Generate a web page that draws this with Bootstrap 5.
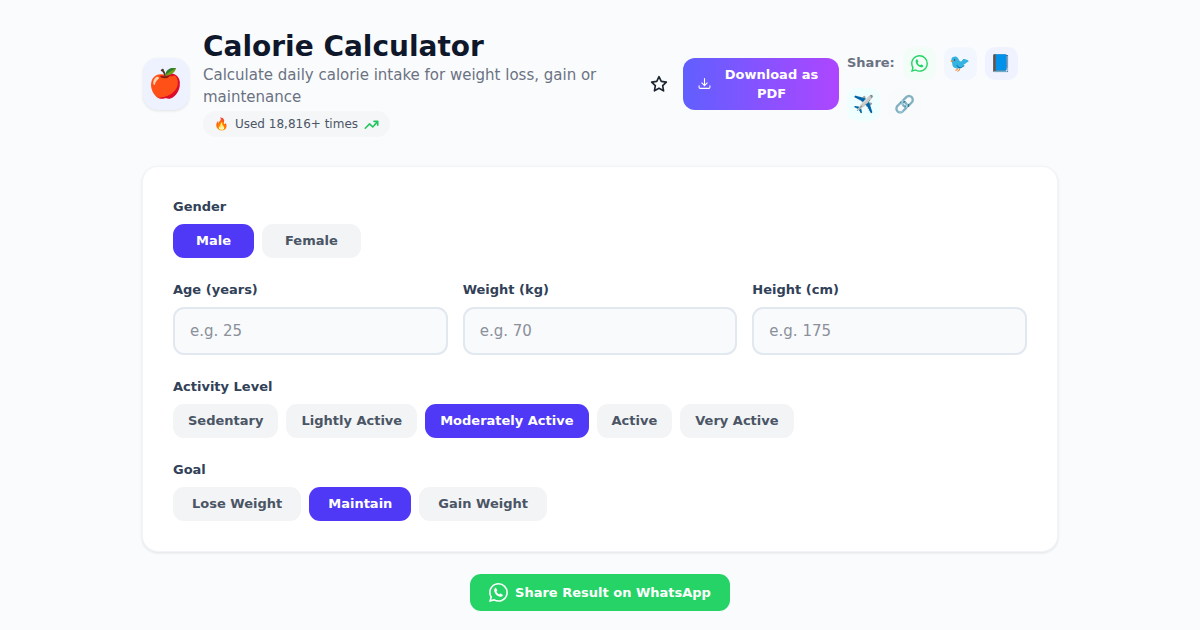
<!DOCTYPE html>
<html lang="en">
<head>
<meta charset="utf-8">
<meta name="viewport" content="width=device-width, initial-scale=1">
<title>Calorie Calculator</title>
<link href="https://cdn.jsdelivr.net/npm/bootstrap@5.3.0/dist/css/bootstrap.min.css" rel="stylesheet">
<style>
  body { background: #fafbfd; color: #0f172a; font: 15px/22px "DejaVu Sans", "Noto Color Emoji", sans-serif; }
  .page-wrap { max-width: 914px; }
  .page-head { padding: 30px 38px 30px 0; gap: 14px; }
  .app-tile { width: 46px; height: 52px; border-radius: 15px; background: #eef2ff; font-size: 28px; box-shadow: 0 1px 3px rgba(0,0,0,.1); }
  .app-title { font-size: 28px; line-height: 34px; font-weight: 700; }
  .app-lead { color: #6a7282; line-height: 22px; max-width: 420px; }
  .used-pill { background: #f5f6f8; color: #4a5565; font-size: 12px; line-height: 18px; padding: 4px 11px; gap: 6px; margin-top: 3px; }
  .star-btn { color: #1e2430; padding: 7px; }
  .pdf-btn { width: 156px; gap: 8px; padding: 7px 15px; border-radius: 12px; font-size: 13px; line-height: 19px; font-weight: 700; color: #fff; background: linear-gradient(90deg, #615fff, #ad46ff); }
  .share-box { width: 172px; gap: 8px; }
  .share-title { font-size: 13px; font-weight: 700; color: #6a7282; }
  .share-btn { width: 33px; height: 33px; border-radius: 10px; font-size: 17px; line-height: 22px; }
  .share-wa { background: #f3fdf7; color: #25d366; }
  .share-tw { background: #f1f6ff; }
  .share-fb { background: #f0f3ff; }
  .share-tg { background: #effeff; }
  .share-link { background: #f9fafb; }
  .calc-card { background: #fff; border-radius: 15px; padding: 30px; gap: 22px; box-shadow: 0 0 0 1px #f3f4f7, 0 1px 3px 1px rgba(0,0,0,.1); }
  .field-label { display: block; font-size: 13px; line-height: 20px; font-weight: 700; color: #314158; margin-bottom: 7px; }
  .field-grid { display: grid; grid-template-columns: repeat(3, 1fr); gap: 15px; }
  .calc-input { height: 48px; border: 2px solid #e2e8f0; border-radius: 11px; background: #f8fafc; padding: 0 15px; font-size: 15px; }
  .calc-input::placeholder { color: #8b909b; }
  .chip-row { gap: 8px; }
  .chip { border: 0; border-radius: 11px; background: #f3f4f6; color: #4a5565; font-size: 13px; line-height: 20px; font-weight: 700; padding: 7px 15px; }
  .chip[aria-pressed="true"] { background: #4f39f6; color: #fff; }
  .chip-gender { padding-inline: 23px; }
  .chip-goal { padding-inline: 19px; }
  .wa-btn { background: #25d366; color: #fff; border-radius: 11px; padding: 8px 19px; gap: 7px; font-size: 13px; line-height: 21px; font-weight: 700; }
  .result-share { margin-top: 23px; }
  @media (max-width: 900px) { .page-head { flex-wrap: wrap; padding-right: 0; } .field-grid { grid-template-columns: 1fr; } }
</style>
</head>
<body>
<svg class="d-none" aria-hidden="true">
  <symbol id="whatsapp" viewBox="0 0 16 16"><path fill="currentColor" d="M13.601 2.326A7.854 7.854 0 0 0 7.994 0C3.627 0 .068 3.558.064 7.926c0 1.399.366 2.76 1.057 3.965L0 16l4.204-1.102a7.933 7.933 0 0 0 3.79.965h.004c4.368 0 7.926-3.558 7.93-7.93A7.898 7.898 0 0 0 13.6 2.326zM7.994 14.521a6.573 6.573 0 0 1-3.356-.92l-.24-.144-2.494.654.666-2.433-.156-.251a6.56 6.56 0 0 1-1.007-3.505c0-3.626 2.957-6.584 6.591-6.584a6.56 6.56 0 0 1 4.66 1.931 6.557 6.557 0 0 1 1.928 4.66c-.004 3.639-2.961 6.592-6.592 6.592z"/><path fill="currentColor" d="M5.1 4.25c.3-.3.75-.28.94.08l.82 1.5c.15.3.1.62-.13.86l-.5.54c.45 1.02 1.28 1.86 2.35 2.35l.56-.5c.25-.22.58-.27.87-.1l1.42.82c.36.2.4.62.1.92-.62.72-1.36 1.06-2.2.85C6.74 10.96 4.8 9 4.33 6.45c-.14-.84.12-1.6.77-2.2z"/></symbol>
</svg>
<main class="page-wrap container-fluid p-0">
  <header class="page-head d-flex align-items-center">
    <div class="app-tile d-flex align-items-center justify-content-center flex-shrink-0">🍎</div>
    <div class="flex-grow-1">
      <h1 class="app-title m-0">Calorie Calculator</h1>
      <p class="app-lead m-0">Calculate daily calorie intake for weight loss, gain or maintenance</p>
      <div class="used-pill d-inline-flex align-items-center rounded-pill">
        <span>🔥</span><span>Used 18,816+ times</span>
        <svg width="15" height="15" viewBox="0 0 24 24" fill="none" stroke="#22c55e" stroke-width="2.5" stroke-linecap="round" stroke-linejoin="round"><path d="M2 18 9 11l5 5 8-9M16 7h6v6"/></svg>
      </div>
    </div>
    <div class="d-flex align-items-center gap-2 flex-shrink-0">
      <button type="button" class="star-btn btn border-0 d-flex" aria-label="Add to favourites">
        <svg width="18" height="18" viewBox="0 0 24 24" fill="none" stroke="currentColor" stroke-width="2.2" stroke-linejoin="round"><path d="m12 2.3 3 6.2 6.8 1-4.9 4.7 1.2 6.9-6.1-3.3-6.1 3.3 1.2-6.9-4.9-4.7 6.8-1z"/></svg>
      </button>
      <button type="button" class="pdf-btn btn border-0 d-flex align-items-center">
        <svg class="flex-shrink-0" width="13" height="13" viewBox="0 0 24 24" fill="none" stroke="currentColor" stroke-width="2" stroke-linecap="round" stroke-linejoin="round"><path d="M12 3v13m-5-5 5 5 5-5M2 16v3q0 2 2 2h16q2 0 2-2v-3"/></svg>
        <span class="flex-grow-1">Download as PDF</span>
      </button>
      <div class="share-box d-flex flex-wrap align-items-center">
        <span class="share-title">Share:</span>
        <button type="button" class="share-btn share-wa btn border-0 p-0 d-flex align-items-center justify-content-center" aria-label="WhatsApp"><svg width="17" height="17"><use href="#whatsapp"/></svg></button>
        <button type="button" class="share-btn share-tw btn border-0 p-0" aria-label="Twitter">🐦</button>
        <button type="button" class="share-btn share-fb btn border-0 p-0" aria-label="Facebook">📘</button>
        <button type="button" class="share-btn share-tg btn border-0 p-0" aria-label="Telegram">✈️</button>
        <button type="button" class="share-btn share-link btn border-0 p-0" aria-label="Copy link">🔗</button>
      </div>
    </div>
  </header>

  <form class="calc-card d-flex flex-column">
    <div role="group" aria-labelledby="gender-label">
      <span class="field-label" id="gender-label">Gender</span>
      <div class="chip-row d-flex flex-wrap">
        <button type="button" class="chip chip-gender" aria-pressed="true">Male</button>
        <button type="button" class="chip chip-gender" aria-pressed="false">Female</button>
      </div>
    </div>
    <div class="field-grid">
      <div><label class="field-label" for="age">Age (years)</label><input class="calc-input form-control" id="age" type="number" placeholder="e.g. 25"></div>
      <div><label class="field-label" for="weight">Weight (kg)</label><input class="calc-input form-control" id="weight" type="number" placeholder="e.g. 70"></div>
      <div><label class="field-label" for="height">Height (cm)</label><input class="calc-input form-control" id="height" type="number" placeholder="e.g. 175"></div>
    </div>
    <div role="group" aria-labelledby="activity-label">
      <span class="field-label" id="activity-label">Activity Level</span>
      <div class="chip-row d-flex flex-wrap">
        <button type="button" class="chip" aria-pressed="false">Sedentary</button>
        <button type="button" class="chip" aria-pressed="false">Lightly Active</button>
        <button type="button" class="chip" aria-pressed="true">Moderately Active</button>
        <button type="button" class="chip" aria-pressed="false">Active</button>
        <button type="button" class="chip" aria-pressed="false">Very Active</button>
      </div>
    </div>
    <div role="group" aria-labelledby="goal-label">
      <span class="field-label" id="goal-label">Goal</span>
      <div class="chip-row d-flex flex-wrap">
        <button type="button" class="chip chip-goal" aria-pressed="false">Lose Weight</button>
        <button type="button" class="chip chip-goal" aria-pressed="true">Maintain</button>
        <button type="button" class="chip chip-goal" aria-pressed="false">Gain Weight</button>
      </div>
    </div>
  </form>

  <div class="result-share d-flex justify-content-center">
    <button type="button" class="wa-btn btn border-0 d-flex align-items-center"><svg width="19" height="19"><use href="#whatsapp"/></svg>Share Result on WhatsApp</button>
  </div>
</main>
<script src="https://cdn.jsdelivr.net/npm/bootstrap@5.3.0/dist/js/bootstrap.bundle.min.js"></script>
</body>
</html>
